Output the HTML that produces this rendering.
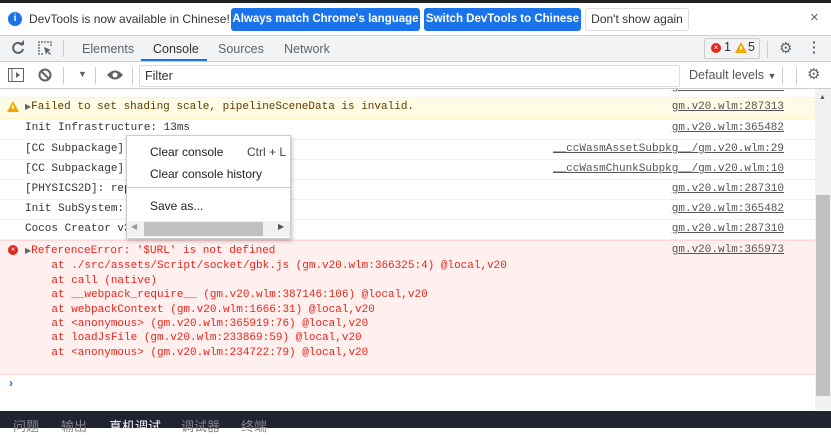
<!DOCTYPE html>
<html><head><meta charset="utf-8"><style>
*{margin:0;padding:0;box-sizing:border-box}
body{width:831px;height:428px;overflow:hidden;background:#fff;font-family:"Liberation Sans",sans-serif;font-size:12px;color:#333;position:relative}
.a{position:absolute}
.m{font-family:"Liberation Mono",monospace;font-size:11px;white-space:pre}
.btn{position:absolute;top:8px;height:23px;border-radius:3px;background:#1a73e8;color:#fff;font-weight:bold;font-size:11.5px;line-height:23px;text-align:center;white-space:nowrap;overflow:hidden}
.row{position:absolute;left:0;width:815px;border-bottom:1px solid #f0f0f0}
.lnk{position:absolute;right:47px;color:#555;text-decoration:underline}
.err{color:#e8261a}
.tab{position:absolute;top:42px;font-size:12.5px;color:#5f6368}
</style></head><body>
<div class="a" style="left:0;top:0;width:831px;height:3px;background:#202124"></div>
<!-- infobar -->
<div class="a" style="left:0;top:3px;width:831px;height:33px;background:#fff;border-bottom:1px solid #cbcdd1"></div>
<div class="a" style="left:8px;top:12px;width:14px;height:14px;border-radius:50%;background:#1a73e8;color:#fff;font-size:10px;font-weight:bold;text-align:center;line-height:14px">i</div>
<div class="a" style="left:29px;top:12px;font-size:12px;color:#333;white-space:nowrap">DevTools is now available in Chinese!</div>
<div class="btn" style="left:231px;width:189px">Always match Chrome's language</div>
<div class="btn" style="left:424px;width:157px">Switch DevTools to Chinese</div>
<div class="a" style="left:585px;top:8px;width:104px;height:23px;border:1px solid #dadce0;border-radius:3px;text-align:center;line-height:21px;font-size:12px;color:#333;white-space:nowrap">Don't show again</div>
<div class="a" style="left:810px;top:9px;font-size:15px;color:#666">×</div>
<!-- tabbar -->
<div class="a" style="left:0;top:36px;width:831px;height:26px;background:#f1f3f4;border-bottom:1px solid #cbcdd1"></div>
<svg class="a" style="left:10px;top:40px" width="16" height="16" viewBox="0 0 16 16"><path d="M12.5 5.5A5 5 0 1 0 13 9" fill="none" stroke="#5f6368" stroke-width="2"/><path d="M9 5h5V0z" fill="#5f6368"/></svg>
<svg class="a" style="left:37px;top:40px" width="16" height="16" viewBox="0 0 16 16"><path d="M6 14H2V2h12v4" fill="none" stroke="#5f6368" stroke-width="1.3" stroke-dasharray="2 1"/><path d="M7 7l7 3-3 1 3 3-1 1-3-3-1 3z" fill="#5f6368"/></svg>
<div class="a" style="left:63px;top:40px;width:1px;height:17px;background:#ccc"></div>
<div class="tab" style="left:82px">Elements</div>
<div class="tab" style="left:153px;color:#333">Console</div>
<div class="a" style="left:141px;top:59px;width:66px;height:2px;background:#1a73e8"></div>
<div class="tab" style="left:218px">Sources</div>
<div class="tab" style="left:284px">Network</div>
<div class="a" style="left:704px;top:38px;width:56px;height:21px;border:1px solid #ccc;border-radius:2px;background:#f1f3f4"></div>
<div class="a" style="left:711px;top:43px;width:10px;height:10px;border-radius:50%;background:#e8261a;color:#fff;font-size:8px;line-height:10px;text-align:center">×</div>
<div class="a" style="left:724px;top:40px;font-size:12.5px;color:#333">1</div>
<svg class="a" style="left:735px;top:42px" width="12" height="11"><path d="M6 0L12 11H0z" fill="#f2a600"/><path d="M6 4v4" stroke="#fff" stroke-width="1.5"/></svg>
<div class="a" style="left:748px;top:40px;font-size:12.5px;color:#333">5</div>
<div class="a" style="left:767px;top:41px;width:1px;height:17px;background:#ccc"></div>
<div class="a" style="left:779px;top:39px;font-size:15px;color:#5f6368">⚙</div>
<div class="a" style="left:812px;top:40px;font-size:14px;color:#5f6368;font-weight:bold;line-height:5px">·<br>·<br>·</div>
<!-- console toolbar -->
<div class="a" style="left:0;top:62px;width:831px;height:27px;background:#fff;border-bottom:1px solid #cbcdd1"></div>
<svg class="a" style="left:8px;top:68px" width="16" height="14"><rect x="0.5" y="0.5" width="15" height="13" fill="none" stroke="#5f6368"/><path d="M4 1v12" stroke="#5f6368"/><path d="M8 4l4 3-4 3z" fill="#5f6368"/></svg>
<svg class="a" style="left:38px;top:68px" width="14" height="14"><circle cx="7" cy="7" r="5.5" fill="none" stroke="#5f6368" stroke-width="2"/><path d="M3 3l8 8" stroke="#5f6368" stroke-width="2"/></svg>
<div class="a" style="left:63px;top:67px;width:1px;height:17px;background:#ccc"></div>
<div class="a" style="left:78px;top:69px;font-size:9px;color:#5f6368">▼</div>
<div class="a" style="left:95px;top:67px;width:1px;height:17px;background:#ccc"></div>
<svg class="a" style="left:106px;top:69px" width="18" height="12"><path d="M1 6Q9-3 17 6Q9 15 1 6z" fill="#5f6368"/><circle cx="9" cy="6" r="2.5" fill="#fff"/></svg>
<div class="a" style="left:132px;top:67px;width:1px;height:17px;background:#ccc"></div>
<div class="a" style="left:139px;top:65px;width:541px;height:22px;border:1px solid #ddd;border-radius:1px"></div>
<div class="a" style="left:145px;top:69px;font-size:12.5px;color:#333">Filter</div>
<div class="a" style="left:689px;top:68px;font-size:12.5px;color:#555">Default levels <span style="font-size:9px">▼</span></div>
<div class="a" style="left:782px;top:67px;width:1px;height:17px;background:#ccc"></div>
<div class="a" style="left:796px;top:67px;width:1px;height:17px;background:#ccc"></div>
<div class="a" style="left:807px;top:65px;font-size:15px;color:#5f6368">⚙</div>
<!-- log -->
<div class="a" style="left:0;top:89px;width:815px;height:8px;overflow:hidden"><span class="m a" style="left:25px;top:-8px;color:#333">Init base: 0ms</span><span class="m a" style="right:31px;top:-8px;color:#555;text-decoration:underline">gm.v20.wlm:365482</span></div>
<div class="row" style="top:97px;height:22px;background:#fffbe5;border-top:1px solid #fff5c2;border-bottom:1px solid #fff5c2"></div>
<svg class="a" style="left:7px;top:101px" width="12" height="11"><path d="M6 0L12 11H0z" fill="#f2a600"/><path d="M6 4v4" stroke="#fff" stroke-width="1.5"/></svg>
<div class="m a" style="left:25px;top:101px;color:#5c3c00"><span style="font-size:8px;color:#666">▶</span>Failed to set shading scale, pipelineSceneData is invalid.</div>
<div class="m lnk a" style="top:101px">gm.v20.wlm:287313</div>

<div class="row" style="top:119px;height:21px"></div>
<div class="m a" style="left:25px;top:122px">Init Infrastructure: 13ms</div><div class="m lnk a" style="top:122px">gm.v20.wlm:365482</div>
<div class="row" style="top:140px;height:20px"></div>
<div class="m a" style="left:25px;top:143px">[CC Subpackage]</div><div class="m lnk a" style="top:143px">__ccWasmAssetSubpkg__/gm.v20.wlm:29</div>
<div class="row" style="top:160px;height:20px"></div>
<div class="m a" style="left:25px;top:163px">[CC Subpackage]</div><div class="m lnk a" style="top:163px">__ccWasmChunkSubpkg__/gm.v20.wlm:10</div>
<div class="row" style="top:180px;height:20px"></div>
<div class="m a" style="left:25px;top:183px">[PHYSICS2D]: rep</div><div class="m lnk a" style="top:183px">gm.v20.wlm:287310</div>
<div class="row" style="top:200px;height:20px"></div>
<div class="m a" style="left:25px;top:203px">Init SubSystem:</div><div class="m lnk a" style="top:203px">gm.v20.wlm:365482</div>
<div class="row" style="top:220px;height:20px"></div>
<div class="m a" style="left:25px;top:223px">Cocos Creator v3</div><div class="m lnk a" style="top:223px">gm.v20.wlm:287310</div>

<div class="a" style="left:0;top:240px;width:815px;height:135px;background:#fff0f0;border-top:1px solid #ffd6d6;border-bottom:1px solid #ffd6d6"></div>
<div class="a" style="left:8px;top:245px;width:10px;height:10px;border-radius:50%;background:#e8261a;color:#fff;font-size:8px;line-height:10px;text-align:center">×</div>
<div class="m a err" style="left:25px;top:244px;line-height:14.4px"><span style="font-size:8px;color:#666">▶</span>ReferenceError: '$URL' is not defined
    at ./src/assets/Script/socket/gbk.js (gm.v20.wlm:366325:4) @local,v20
    at call (native)
    at __webpack_require__ (gm.v20.wlm:387146:106) @local,v20
    at webpackContext (gm.v20.wlm:1666:31) @local,v20
    at &lt;anonymous&gt; (gm.v20.wlm:365919:76) @local,v20
    at loadJsFile (gm.v20.wlm:233869:59) @local,v20
    at &lt;anonymous&gt; (gm.v20.wlm:234722:79) @local,v20</div>
<div class="m lnk a" style="top:244px">gm.v20.wlm:365973</div>
<div class="a" style="left:9px;top:376px;color:#1a73e8;font-size:12px;font-weight:bold">›</div>
<!-- scrollbar -->
<div class="a" style="left:815px;top:89px;width:16px;height:321px;background:#f1f1f1"></div>
<div class="a" style="left:819px;top:94px;font-size:7px;color:#555">▲</div>
<div class="a" style="left:816px;top:195px;width:14px;height:201px;background:#c1c1c1"></div>
<!-- context menu -->
<div class="a" style="left:126px;top:135px;width:165px;height:104px;background:#fff;border:1px solid #ccc;box-shadow:1px 2px 4px rgba(0,0,0,.25)"></div>
<div class="a" style="left:150px;top:145px;font-size:12px;color:#222">Clear console</div>
<div class="a" style="left:247px;top:145px;font-size:12px;color:#444">Ctrl + L</div>
<div class="a" style="left:150px;top:167px;font-size:12px;color:#222">Clear console history</div>
<div class="a" style="left:127px;top:187px;width:163px;height:1px;background:#ccc"></div>
<div class="a" style="left:150px;top:199px;font-size:12px;color:#222">Save as...</div>
<div class="a" style="left:127px;top:221px;width:163px;height:16px;background:#f1f1f1"></div>
<div class="a" style="left:144px;top:222px;width:119px;height:14px;background:#c1c1c1"></div>
<div class="a" style="left:131px;top:222px;font-size:8px;color:#999">◀</div>
<div class="a" style="left:278px;top:222px;font-size:8px;color:#555">▶</div>
<!-- bottom bar -->
<div class="a" style="left:0;top:411px;width:831px;height:17px;background:#202432;font-family:'Liberation Sans','Noto Sans CJK SC',sans-serif;font-size:13px;color:#888">
<span class="a" style="left:13px;top:5px">问题</span><span class="a" style="left:61px;top:5px">输出</span><span class="a" style="left:109px;top:5px;color:#fff">真机调试</span><span class="a" style="left:181px;top:5px">调试器</span><span class="a" style="left:241px;top:5px">终端</span></div>
</body></html>
